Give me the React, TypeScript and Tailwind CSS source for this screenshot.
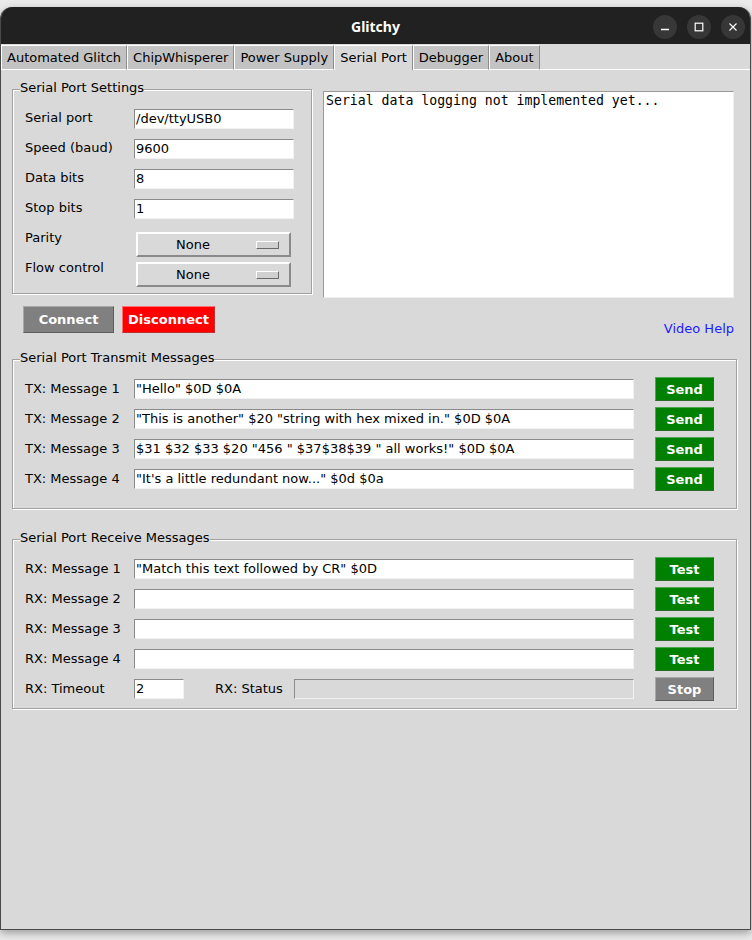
import React from "react";

const FONT = "font-['DejaVu_Sans','Liberation_Sans',sans-serif]";
const ENTRY =
  "h-[20px] bg-white border border-t-[#8a8a8a] border-l-[#8a8a8a] border-b-[#f2f2f2] border-r-[#f2f2f2] px-[1px] text-[13px] leading-[18px] text-black whitespace-nowrap overflow-hidden";
const FRAME =
  "border border-[#a0a0a0] shadow-[inset_1px_1px_0_#ffffff,1px_1px_0_#ffffff]";

const tabs = ["Automated Glitch", "ChipWhisperer", "Power Supply", "Serial Port", "Debugger", "About"];

const txMessages = [
  '"Hello" $0D $0A',
  '"This is another" $20 "string with hex mixed in." $0D $0A',
  '$31 $32 $33 $20 "456 " $37$38$39 " all works!" $0D $0A',
  '"It\'s a little redundant now..." $0d $0a',
];

const rxMessages = ['"Match this text followed by CR" $0D', "", "", ""];

function Legend({ title }: { title: string }) {
  return (
    <div className="-mt-[10px] ml-[7px] w-fit bg-[#d9d9d9] text-[13px] leading-[16px] text-black">
      {title}
    </div>
  );
}

function ColorButton({ label, tone, w, h }: { label: string; tone: "green" | "gray" | "red"; w: string; h: string }) {
  const toneClass =
    tone === "green"
      ? "bg-[#008000] border-t-[#4fa84f] border-l-[#4fa84f] border-b-[#2c6b2c] border-r-[#2c6b2c]"
      : tone === "red"
      ? "bg-[#ff0000] border-t-[#ff7070] border-l-[#ff7070] border-b-[#c03030] border-r-[#c03030]"
      : "bg-[#808080] border-t-[#a8a8a8] border-l-[#a8a8a8] border-b-[#5e5e5e] border-r-[#5e5e5e]";
  return (
    <div
      className={`${w} ${h} ${toneClass} border flex items-center justify-center text-white font-bold text-[13px] leading-none shrink-0`}
    >
      {label}
    </div>
  );
}

function OptionMenu({ value }: { value: string }) {
  return (
    <div className="mt-[8px] ml-[2px] w-[155px] h-[25px] flex items-center bg-[#d9d9d9] border-2 border-t-white border-l-white border-b-[#8a8a8a] border-r-[#8a8a8a]">
      <div className="w-[110px] text-center text-[13px] leading-[16px] text-black">{value}</div>
      <div className="ml-[8px] w-[23px] h-[8px] border border-t-white border-l-white border-b-[#6a6a6a] border-r-[#6a6a6a] bg-[#d0d0d0]" />
    </div>
  );
}

function WinButton({ children }: { children: React.ReactNode }) {
  return (
    <div className="w-[24px] h-[24px] rounded-full bg-[#373737] flex items-center justify-center">
      {children}
    </div>
  );
}

export default function App() {
  return (
    <div className={`w-[752px] h-[940px] bg-[#ebebeb] overflow-hidden pt-[7px] ${FONT}`}>
      <div className="w-[751px] h-[923px] flex flex-col rounded-t-[12px] overflow-hidden bg-[#d9d9d9] border-x border-b border-[#4a4a4a] shadow-[0_3px_8px_rgba(0,0,0,0.35)]">
        {/* title bar */}
        <div className="h-[37px] shrink-0 bg-[#212121] grid grid-cols-[1fr_auto_1fr] items-center pt-[2px]">
          <div />
          <div className="font-['Noto_Sans',sans-serif] font-bold text-[14px] text-white">Glitchy</div>
          <div className="flex justify-end gap-[10px] pr-[5px]">
            <WinButton>
              <svg width="10" height="10" viewBox="0 0 10 10">
                <path d="M1 7.5h8" stroke="#fff" strokeWidth="1.3" />
              </svg>
            </WinButton>
            <WinButton>
              <svg width="10" height="10" viewBox="0 0 10 10">
                <rect x="1.2" y="1.2" width="7.6" height="7.6" fill="none" stroke="#fff" strokeWidth="1.2" />
              </svg>
            </WinButton>
            <WinButton>
              <svg width="10" height="10" viewBox="0 0 10 10">
                <path d="M1.5 1.5l7 7M8.5 1.5l-7 7" stroke="#fff" strokeWidth="1.1" />
              </svg>
            </WinButton>
          </div>
        </div>

        {/* tabs */}
        <div className="h-[26px] shrink-0 flex items-end">
          {tabs.map((t) => {
            const sel = t === "Serial Port";
            return (
              <div
                key={t}
                className={`h-[25px] px-[5px] flex items-center text-[13px] text-black border-t border-l border-r border-t-white border-l-white border-r-[#8c8c8c] ${
                  sel ? "bg-[#d9d9d9]" : "bg-[#c3c3c3] border-b border-b-white"
                }`}
              >
                {t}
              </div>
            );
          })}
          <div className="flex-1 h-[25px] border-b border-white" />
        </div>

        {/* content */}
        <div className="flex-1 px-[11px]">
          <div className="flex items-start">
            <div className={`mt-[19px] w-[300px] pb-[9px] ${FRAME}`}>
              <Legend title="Serial Port Settings" />
              <div className="mt-[8px] pl-[12px] flex flex-col">
                {[
                  ["Serial port", "/dev/ttyUSB0"],
                  ["Speed (baud)", "9600"],
                  ["Data bits", "8"],
                  ["Stop bits", "1"],
                ].map(([l, v]) => (
                  <div key={l} className="h-[30px] flex items-start">
                    <div className="w-[109px] mt-[6px] text-[13px] leading-[16px] text-black">{l}</div>
                    <div className={`mt-[5px] w-[160px] ${ENTRY}`}>{v}</div>
                  </div>
                ))}
                {["Parity", "Flow control"].map((l) => (
                  <div key={l} className="h-[30px] flex items-start">
                    <div className="w-[109px] mt-[6px] text-[13px] leading-[16px] text-black">{l}</div>
                    <OptionMenu value="None" />
                  </div>
                ))}
              </div>
            </div>
            <div className="mt-[21px] ml-[11px] w-[411px] h-[207px] bg-white border border-t-[#9a9a9a] border-l-[#9a9a9a] border-b-[#efefef] border-r-[#efefef] pl-[2px] pt-[1px] font-['DejaVu_Sans_Mono',monospace] text-[13.2px] leading-[16px] text-black">
              Serial data logging not implemented yet...
            </div>
          </div>

          <div className="mt-[8px] h-[27px] flex items-start">
            <div className="ml-[11px]">
              <ColorButton label="Connect" tone="gray" w="w-[91px]" h="h-[27px]" />
            </div>
            <div className="ml-[8px]">
              <ColorButton label="Disconnect" tone="red" w="w-[93px]" h="h-[27px]" />
            </div>
            <div className="ml-auto mr-[5px] mt-[15px] text-[13px] leading-[16px] text-[#1c1cff]">Video Help</div>
          </div>

          <div className={`mt-[26px] w-[725px] pb-[14px] ${FRAME}`}>
            <Legend title="Serial Port Transmit Messages" />
            <div className="mt-[8px] pl-[12px] flex flex-col">
              {txMessages.map((m, i) => (
                <div key={i} className="h-[30px] flex items-center">
                  <div className="w-[109px] text-[13px] leading-[16px] text-black">TX: Message {i + 1}</div>
                  <div className={`w-[500px] ${ENTRY}`}>{m}</div>
                  <div className="ml-[21px]">
                    <ColorButton label="Send" tone="green" w="w-[59px]" h="h-[24px]" />
                  </div>
                </div>
              ))}
            </div>
          </div>

          <div className={`mt-[30px] w-[725px] pb-[4px] ${FRAME}`}>
            <Legend title="Serial Port Receive Messages" />
            <div className="mt-[8px] pl-[12px] flex flex-col">
              {rxMessages.map((m, i) => (
                <div key={i} className="h-[30px] flex items-center">
                  <div className="w-[109px] text-[13px] leading-[16px] text-black">RX: Message {i + 1}</div>
                  <div className={`w-[500px] ${ENTRY}`}>{m}</div>
                  <div className="ml-[21px]">
                    <ColorButton label="Test" tone="green" w="w-[59px]" h="h-[24px]" />
                  </div>
                </div>
              ))}
              <div className="h-[30px] flex items-center">
                <div className="w-[109px] text-[13px] leading-[16px] text-black">RX: Timeout</div>
                <div className={`w-[50px] ${ENTRY}`}>2</div>
                <div className="ml-[31px] w-[79px] text-[13px] leading-[16px] text-black">RX: Status</div>
                <div className="w-[340px] h-[20px] bg-[#d9d9d9] border border-t-[#8a8a8a] border-l-[#8a8a8a] border-b-[#f2f2f2] border-r-[#f2f2f2]" />
                <div className="ml-[21px]">
                  <ColorButton label="Stop" tone="gray" w="w-[59px]" h="h-[24px]" />
                </div>
              </div>
            </div>
          </div>
        </div>
      </div>
    </div>
  );
}
